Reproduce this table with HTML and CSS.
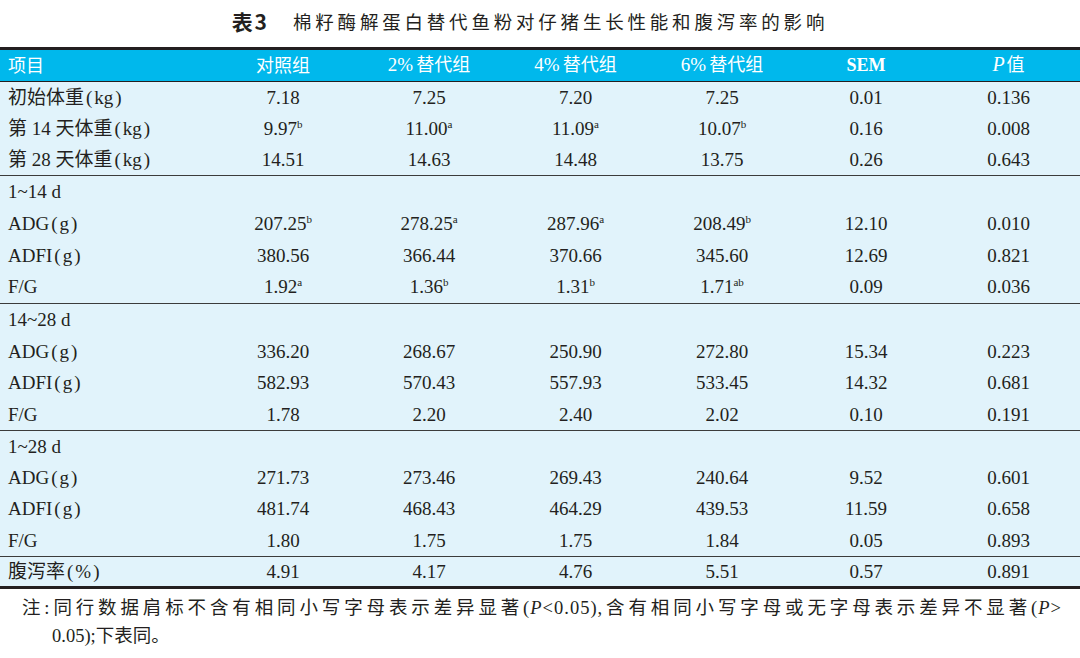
FILE: index.html
```html
<!DOCTYPE html>
<html lang="zh">
<head>
<meta charset="utf-8">
<title>表3</title>
<link rel="stylesheet" href="styles.css">
</head>
<body>
<div class="page">
  <h1 class="title"><span class="tno">表 3</span><span class="ttext">棉籽酶解蛋白替代鱼粉对仔猪生长性能和腹泻率的影响</span></h1>
  <table class="tbl">
    <colgroup>
      <col class="c0"><col class="c1"><col class="c2"><col class="c3"><col class="c4"><col class="c5"><col class="c6">
    </colgroup>
    <thead>
      <tr class="hrow">
        <th class="lab">项目</th>
        <th>对照组</th>
        <th><span class="num">2%</span>替代组</th>
        <th><span class="num">4%</span>替代组</th>
        <th><span class="num">6%</span>替代组</th>
        <th><span class="sem">SEM</span></th>
        <th><i class="pi">P</i>值</th>
      </tr>
    </thead>
    <tbody class="grp g1">
      <tr><td class="lab">初始体重<span class="pl">(</span>kg<span class="pr">)</span></td><td>7.18</td><td>7.25</td><td>7.20</td><td>7.25</td><td>0.01</td><td>0.136</td></tr>
      <tr><td class="lab">第 14 天体重<span class="pl">(</span>kg<span class="pr">)</span></td><td>9.97<sup>b</sup></td><td>11.00<sup>a</sup></td><td>11.09<sup>a</sup></td><td>10.07<sup>b</sup></td><td>0.16</td><td>0.008</td></tr>
      <tr><td class="lab">第 28 天体重<span class="pl">(</span>kg<span class="pr">)</span></td><td>14.51</td><td>14.63</td><td>14.48</td><td>13.75</td><td>0.26</td><td>0.643</td></tr>
    </tbody>
    <tbody class="grp g2">
      <tr><td class="lab">1~14 d</td><td></td><td></td><td></td><td></td><td></td><td></td></tr>
      <tr><td class="lab">ADG<span class="pl">(</span>g<span class="pr">)</span></td><td>207.25<sup>b</sup></td><td>278.25<sup>a</sup></td><td>287.96<sup>a</sup></td><td>208.49<sup>b</sup></td><td>12.10</td><td>0.010</td></tr>
      <tr><td class="lab">ADFI<span class="pl">(</span>g<span class="pr">)</span></td><td>380.56</td><td>366.44</td><td>370.66</td><td>345.60</td><td>12.69</td><td>0.821</td></tr>
      <tr><td class="lab">F/G</td><td>1.92<sup>a</sup></td><td>1.36<sup>b</sup></td><td>1.31<sup>b</sup></td><td>1.71<sup>ab</sup></td><td>0.09</td><td>0.036</td></tr>
    </tbody>
    <tbody class="grp g3">
      <tr><td class="lab">14~28 d</td><td></td><td></td><td></td><td></td><td></td><td></td></tr>
      <tr><td class="lab">ADG<span class="pl">(</span>g<span class="pr">)</span></td><td>336.20</td><td>268.67</td><td>250.90</td><td>272.80</td><td>15.34</td><td>0.223</td></tr>
      <tr><td class="lab">ADFI<span class="pl">(</span>g<span class="pr">)</span></td><td>582.93</td><td>570.43</td><td>557.93</td><td>533.45</td><td>14.32</td><td>0.681</td></tr>
      <tr><td class="lab">F/G</td><td>1.78</td><td>2.20</td><td>2.40</td><td>2.02</td><td>0.10</td><td>0.191</td></tr>
    </tbody>
    <tbody class="grp g4">
      <tr><td class="lab">1~28 d</td><td></td><td></td><td></td><td></td><td></td><td></td></tr>
      <tr><td class="lab">ADG<span class="pl">(</span>g<span class="pr">)</span></td><td>271.73</td><td>273.46</td><td>269.43</td><td>240.64</td><td>9.52</td><td>0.601</td></tr>
      <tr><td class="lab">ADFI<span class="pl">(</span>g<span class="pr">)</span></td><td>481.74</td><td>468.43</td><td>464.29</td><td>439.53</td><td>11.59</td><td>0.658</td></tr>
      <tr><td class="lab">F/G</td><td>1.80</td><td>1.75</td><td>1.75</td><td>1.84</td><td>0.05</td><td>0.893</td></tr>
    </tbody>
    <tbody class="grp glast">
      <tr><td class="lab">腹泻率<span class="pl">(</span>%<span class="pr">)</span></td><td>4.91</td><td>4.17</td><td>4.76</td><td>5.51</td><td>0.57</td><td>0.891</td></tr>
    </tbody>
  </table>
  <div class="note">
    <div class="nl1">注:同行数据肩标不含有相同小写字母表示差异显著(<i>P</i>&lt;0.05),含有相同小写字母或无字母表示差异不显著(<i>P</i>&gt;</div>
    <div class="nl2">0.05);下表同。</div>
  </div>
</div>
</body>
</html>
```

FILE: styles.css
```css
html, body {
  margin: 0;
  padding: 0;
  background: #ffffff;
}
body {
  font-family: "Liberation Serif", "Noto Sans CJK SC", serif;
  color: #231f20;
}
.page {
  width: 1080px;
  height: 658px;
  overflow: hidden;
}
.title {
  margin: 0;
  height: 47px;
  display: flex;
  align-items: center;
  justify-content: center;
  font-size: 19px;
  font-weight: normal;
  color: #231f20;
  line-height: 1;
  padding-bottom: 4px;
  padding-right: 20px;
  box-sizing: border-box;
}
.tno {
  font-family: "Noto Sans CJK SC", sans-serif;
  font-weight: 700;
  font-size: 21px;
  margin-right: 26px;
  word-spacing: -3px;
}
.ttext {
  font-family: "Noto Sans CJK SC", sans-serif;
  letter-spacing: 3.8px;
  font-size: 18.5px;
}
.tbl {
  width: 1080px;
  border-collapse: collapse;
  table-layout: fixed;
  font-size: 19px;
  background: #e1f3fb;
  border-top: 3px solid #231f20;
  border-bottom: 3px solid #231f20;
}
.c0 { width: 210px; }
.c1 { width: 146px; }
.c2 { width: 146px; }
.c3 { width: 147px; }
.c4 { width: 146px; }
.c5 { width: 142px; }
.c6 { width: 143px; }
.hrow {
  background: #00b8ec;
  color: #ffffff;
  border-bottom: 1px solid #231f20;
}
.hrow th {
  height: 33px;
  font-family: "Noto Sans CJK SC", sans-serif;
  font-weight: normal;
  font-size: 18px;
  padding: 0 0 3px 0;
  box-sizing: border-box;
  text-align: center;
  vertical-align: middle;
  line-height: 1;
}
.hrow th.lab { text-align: left; padding-left: 8px; }
.num { font-family: "Liberation Serif", serif; font-size: 19px; margin-right: 3px; }
.sem { font-family: "Liberation Serif", serif; font-weight: 700; font-size: 18px; }
.pi { font-family: "Liberation Serif", serif; font-size: 20px; margin-right: 2px; }
.grp { border-bottom: 1px solid #3b3b3b; }
.g1 td { height: 31px; }
.g2 td { height: 31.7px; }
.g3 td { height: 31.5px; }
.g4 td { height: 31.3px; }
.glast { border-bottom: none; }
.glast td { height: 29.5px; }
td {
  padding: 0;
  text-align: center;
  vertical-align: middle;
  line-height: 1;
  white-space: nowrap;
}
td.lab {
  text-align: left;
  padding-left: 8px;
}
.pl { margin-left: 2px; margin-right: 2px; }
.pr { margin-left: 2px; }
sup {
  font-size: 11px;
  line-height: 0;
  vertical-align: 7px;
}
.note {
  padding-left: 22px;
  padding-right: 18px;
  padding-top: 5px;
  font-size: 18.5px;
  line-height: 28px;
  font-family: "Liberation Serif", "Noto Sans CJK SC", serif;
}
.nl1 {
  text-align: justify;
  text-align-last: justify;
  letter-spacing: 1px;
}
.nl2 {
  padding-left: 30px;
}
```
